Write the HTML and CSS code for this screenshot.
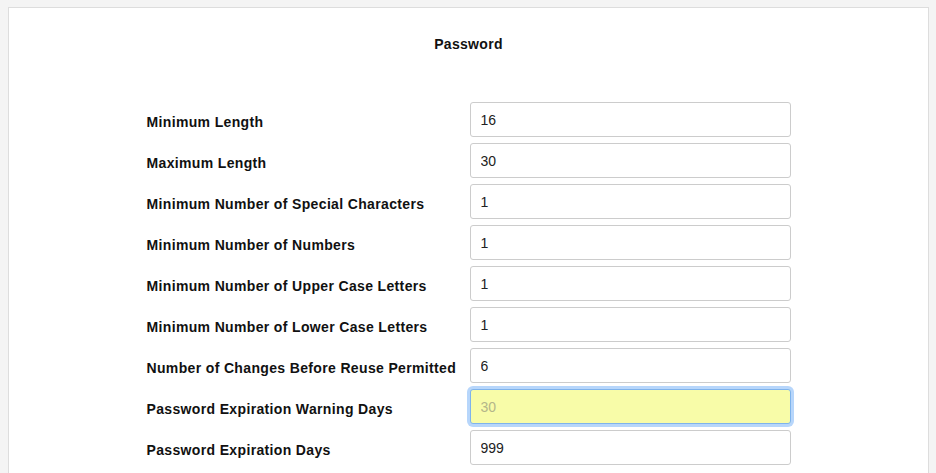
FILE: index.html
```html
<!DOCTYPE html>
<html>
<head>
<meta charset="utf-8">
<link rel="stylesheet" href="styles.css">
</head>
<body>
<div class="panel">
  <h2 class="title">Password</h2>
  <form class="form">
    <label class="label">Minimum Length</label>
    <input class="field" type="text" value="16">
    <label class="label">Maximum Length</label>
    <input class="field" type="text" value="30">
    <label class="label">Minimum Number of Special Characters</label>
    <input class="field" type="text" value="1">
    <label class="label">Minimum Number of Numbers</label>
    <input class="field" type="text" value="1">
    <label class="label">Minimum Number of Upper Case Letters</label>
    <input class="field" type="text" value="1">
    <label class="label">Minimum Number of Lower Case Letters</label>
    <input class="field" type="text" value="1">
    <label class="label">Number of Changes Before Reuse Permitted</label>
    <input class="field" type="text" value="6">
    <label class="label">Password Expiration Warning Days</label>
    <input class="field field-focus" type="text" placeholder="30">
    <label class="label">Password Expiration Days</label>
    <input class="field" type="text" value="999">
  </form>
</div>
</body>
</html>
```

FILE: styles.css
```css
html, body {
  margin: 0;
  padding: 0;
  background: #f4f4f4;
  font-family: "Liberation Sans", Arial, sans-serif;
  overflow: hidden;
}
.panel {
  margin: 7px 7px 0 8px;
  background: #fff;
  border: 1px solid #dddddd;
  border-bottom: none;
  padding: 28px 0 10px;
}
.title {
  margin: 0;
  font-size: 14px;
  letter-spacing: 0.3px;
  line-height: 16px;
  font-weight: bold;
  text-align: center;
  color: #111;
}
.form {
  margin: 50px 0 0;
  display: grid;
  grid-template-columns: 323px 321px;
  grid-auto-rows: 34px;
  row-gap: 7px;
  justify-content: center;
  align-items: center;
}
.label {
  font-size: 14px;
  letter-spacing: 0.35px;
  font-weight: bold;
  color: #111;
  padding-top: 5px;
  white-space: nowrap;
}
.field {
  box-sizing: border-box;
  height: 35px;
  width: 321px;
  margin: 0;
  border: 1px solid #cccccc;
  border-radius: 3px;
  padding: 1px 10px 0;
  font-family: "Liberation Sans", Arial, sans-serif;
  font-size: 14px;
  color: #222;
  background: #fff;
  outline: none;
}
.field-focus {
  background: #f8fca8;
  border-color: #7fb3ec;
  box-shadow: 0 0 0 3px #b7d6fb;
}
.field-focus::placeholder {
  color: #b4b68a;
  opacity: 1;
}
```
